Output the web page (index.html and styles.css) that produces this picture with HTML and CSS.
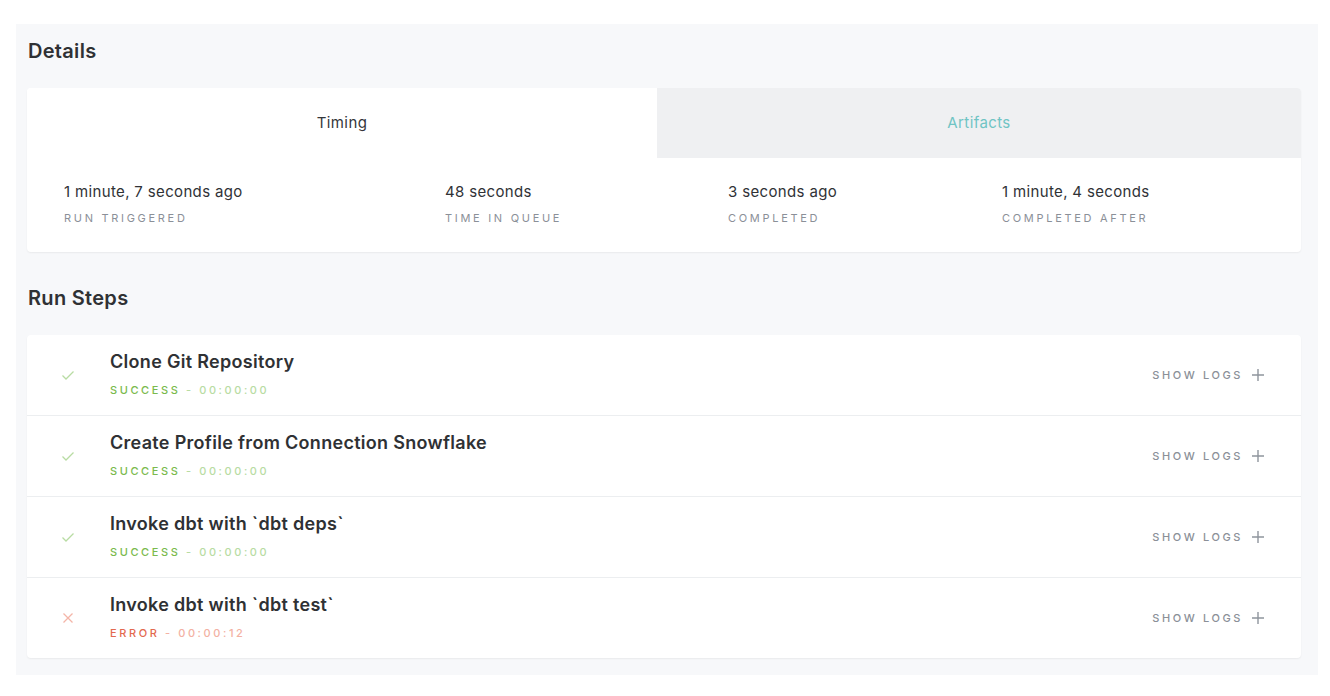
FILE: index.html
```html
<!DOCTYPE html>
<html>
<head>
<meta charset="utf-8">
<link rel="stylesheet" href="styles.css">
</head>
<body>
<div class="panel">
  <h2 class="heading">Details</h2>
  <div class="card">
    <div class="tabs">
      <div class="tab tab-active">Timing</div>
      <div class="tab tab-inactive">Artifacts</div>
    </div>
    <div class="stats">
      <div class="stat"><div class="stat-value">1 minute, 7 seconds ago</div><div class="stat-label">Run Triggered</div></div>
      <div class="stat"><div class="stat-value">48 seconds</div><div class="stat-label">Time in Queue</div></div>
      <div class="stat"><div class="stat-value">3 seconds ago</div><div class="stat-label">Completed</div></div>
      <div class="stat"><div class="stat-value">1 minute, 4 seconds</div><div class="stat-label">Completed After</div></div>
    </div>
  </div>

  <h2 class="heading heading-steps">Run Steps</h2>
  <div class="card steps">
    <div class="step">
      <div class="step-icon"><svg width="14" height="14" viewBox="0 0 14 14"><path d="M1.5 7.5 L5 11 L12.5 3.5" fill="none" stroke="#b8dca3" stroke-width="1.3"/></svg></div>
      <div class="step-body">
        <div class="step-title">Clone Git Repository</div>
        <div class="step-status success">Success <span class="step-time">- 00:00:00</span></div>
      </div>
      <div class="logs">Show Logs <svg width="14" height="14" viewBox="0 0 14 14"><path d="M7 1 V13 M1 7 H13" stroke="#8f959d" stroke-width="1.4"/></svg></div>
    </div>
    <div class="step">
      <div class="step-icon"><svg width="14" height="14" viewBox="0 0 14 14"><path d="M1.5 7.5 L5 11 L12.5 3.5" fill="none" stroke="#b8dca3" stroke-width="1.3"/></svg></div>
      <div class="step-body">
        <div class="step-title">Create Profile from Connection Snowflake</div>
        <div class="step-status success">Success <span class="step-time">- 00:00:00</span></div>
      </div>
      <div class="logs">Show Logs <svg width="14" height="14" viewBox="0 0 14 14"><path d="M7 1 V13 M1 7 H13" stroke="#8f959d" stroke-width="1.4"/></svg></div>
    </div>
    <div class="step">
      <div class="step-icon"><svg width="14" height="14" viewBox="0 0 14 14"><path d="M1.5 7.5 L5 11 L12.5 3.5" fill="none" stroke="#b8dca3" stroke-width="1.3"/></svg></div>
      <div class="step-body">
        <div class="step-title">Invoke dbt with `dbt deps`</div>
        <div class="step-status success">Success <span class="step-time">- 00:00:00</span></div>
      </div>
      <div class="logs">Show Logs <svg width="14" height="14" viewBox="0 0 14 14"><path d="M7 1 V13 M1 7 H13" stroke="#8f959d" stroke-width="1.4"/></svg></div>
    </div>
    <div class="step">
      <div class="step-icon"><svg width="14" height="14" viewBox="0 0 14 14"><path d="M2.5 2.5 L11.5 11.5 M11.5 2.5 L2.5 11.5" fill="none" stroke="#f4b5a8" stroke-width="1.3"/></svg></div>
      <div class="step-body">
        <div class="step-title">Invoke dbt with `dbt test`</div>
        <div class="step-status error">Error <span class="step-time">- 00:00:12</span></div>
      </div>
      <div class="logs">Show Logs <svg width="14" height="14" viewBox="0 0 14 14"><path d="M7 1 V13 M1 7 H13" stroke="#8f959d" stroke-width="1.4"/></svg></div>
    </div>
  </div>
</div>
</body>
</html>
```

FILE: styles.css
```css
* { box-sizing: border-box; }
html, body { margin: 0; padding: 0; background: #ffffff; }
body {
  font-family: Inter, "Noto Sans", "Liberation Sans", sans-serif;
  color: #303236;
  -webkit-font-smoothing: antialiased;
}
.panel {
  margin: 24px 0 0 16px;
  width: 1302px;
  height: 651px;
  background: #f7f8fa;
  padding: 15px 17px 0 11px;
}
.heading {
  margin: 0 0 25px 1px;
  font-size: 20px;
  line-height: 24px;
  font-weight: 600;
  letter-spacing: 0.3px;
  color: #2f3134;
}
.heading-steps { margin-top: 34px; }
.card {
  background: #ffffff;
  border-radius: 4px;
  box-shadow: 0 1px 2px rgba(0, 0, 0, 0.06);
  overflow: hidden;
}
.tabs {
  display: grid;
  grid-template-columns: 630px 1fr;
  height: 70px;
}
.tab {
  display: flex;
  align-items: center;
  justify-content: center;
  font-size: 15px;
  letter-spacing: 0.4px;
  padding-bottom: 1px;
}
.tab-active { background: #ffffff; color: #34363a; }
.tab-inactive { background: #eff0f2; color: #6fc4c4; }
.stats {
  display: grid;
  grid-template-columns: 381px 283px 274px 1fr;
  padding: 24px 0 27px 37px;
}
.stat-value {
  font-size: 15px;
  line-height: 20px;
  letter-spacing: 0.35px;
  color: #303236;
}
.stat-label {
  margin-top: 9px;
  font-size: 11px;
  line-height: 14px;
  letter-spacing: 2.7px;
  text-transform: uppercase;
  color: #8b9098;
}
.step {
  display: flex;
  align-items: center;
  height: 81px;
  border-bottom: 1px solid #eceef0;
  padding: 0 36px 0 34px;
}
.step:last-child { border-bottom: none; height: 80px; }
.step-icon {
  width: 49px;
  display: flex;
  align-items: center;
}
.step-body {
  flex: 1;
  display: flex;
  flex-direction: column;
}
.step-title {
  font-size: 18px;
  line-height: 22px;
  font-weight: 600;
  letter-spacing: 0.3px;
  color: #2f3134;
  margin-top: -2px;
}
.step-status {
  margin-top: 10px;
  font-size: 11px;
  line-height: 14px;
  letter-spacing: 2.6px;
  text-transform: uppercase;
  font-weight: 500;
}
.success { color: #7aba4d; }
.success .step-time { color: #b8dca3; }
.error { color: #e3694f; }
.error .step-time { color: #f3b1a3; }
.logs {
  display: flex;
  align-items: center;
  gap: 8px;
  font-size: 11px;
  letter-spacing: 2.6px;
  text-transform: uppercase;
  color: #8b9098;
  font-weight: 500;
}
```
